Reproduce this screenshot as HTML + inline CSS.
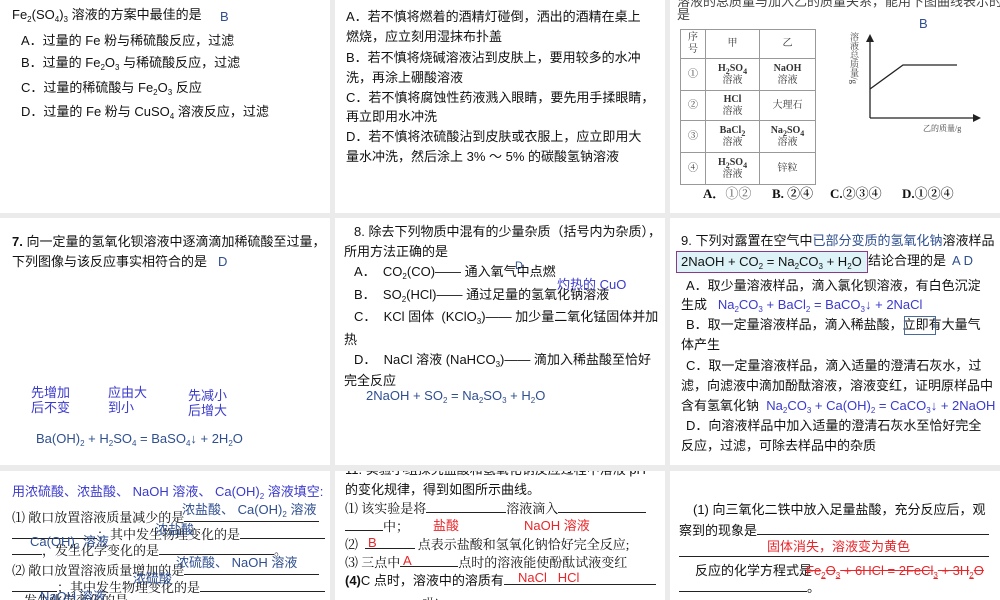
<!DOCTYPE html>
<html><head><meta charset="utf-8"><style>
body{margin:0;width:1000px;height:600px;background:#ebebeb;position:relative;overflow:hidden;font-family:"Liberation Sans","Noto Sans CJK SC",sans-serif;font-size:13px;color:#111}
.p{position:absolute;background:#fff;overflow:hidden}
.t{position:absolute;white-space:nowrap;line-height:16px}
.s{font-family:"Liberation Serif","Noto Serif CJK SC",serif}
sub{font-size:8px;vertical-align:-3px;line-height:0}
.b{color:#2f4f8f}.bl{color:#3a3acb}.r{color:#e8262a}
.u{display:inline-block;border-bottom:1px solid #222;height:12px}
td{border:1px solid #999;text-align:center;font-family:"Liberation Serif","Noto Serif CJK SC",serif;font-size:10px;line-height:12px;color:#333;padding:0}
</style></head><body>

<div class="p" style="left:0;top:0;width:330px;height:213px">
<div class="t" style="left:12px;top:7px">Fe<sub>2</sub>(SO<sub>4</sub>)<sub>3</sub> 溶液的方案中最佳的是</div>
<div class="t b" style="left:220px;top:9px">B</div>
<div class="t" style="left:21px;top:33px">A．过量的 Fe 粉与稀硫酸反应，过滤</div>
<div class="t" style="left:21px;top:55px">B．过量的 Fe<sub>2</sub>O<sub>3</sub> 与稀硫酸反应，过滤</div>
<div class="t" style="left:21px;top:80px">C．过量的稀硫酸与 Fe<sub>2</sub>O<sub>3</sub> 反应</div>
<div class="t" style="left:21px;top:104px">D．过量的 Fe 粉与 CuSO<sub>4</sub> 溶液反应，过滤</div>
</div>

<div class="p" style="left:335px;top:0;width:330px;height:213px">
<div class="t" style="left:11px;top:9px">A．若不慎将燃着的酒精灯碰倒，洒出的酒精在桌上</div>
<div class="t" style="left:11px;top:29px">燃烧，应立刻用湿抹布扑盖</div>
<div class="t" style="left:11px;top:50px">B．若不慎将烧碱溶液沾到皮肤上，要用较多的水冲</div>
<div class="t" style="left:11px;top:70px">洗，再涂上硼酸溶液</div>
<div class="t" style="left:11px;top:90px">C．若不慎将腐蚀性药液溅入眼睛，要先用手揉眼睛，</div>
<div class="t" style="left:11px;top:109px">再立即用水冲洗</div>
<div class="t" style="left:11px;top:129px">D．若不慎将浓硫酸沾到皮肤或衣服上，应立即用大</div>
<div class="t" style="left:11px;top:149px">量水冲洗，然后涂上 3% ～ 5% 的碳酸氢钠溶液</div>
</div>

<div class="p" style="left:670px;top:0;width:330px;height:213px">
<div class="t" style="left:7px;top:-6px;color:#444">溶液的总质量与加入乙的质量关系，能用下图曲线表示的</div>
<div class="t" style="left:7px;top:7px;color:#444">是</div>
<div class="t b" style="left:249px;top:16px">B</div>
<table style="position:absolute;left:10px;top:29px;border-collapse:collapse;width:136px">
<tr style="height:29px"><td style="width:24px">序<br>号</td><td style="width:53px">甲</td><td>乙</td></tr>
<tr style="height:32px"><td>①</td><td><b>H<sub>2</sub>SO<sub>4</sub></b><br>溶液</td><td><b>NaOH</b><br>溶液</td></tr>
<tr style="height:30px"><td>②</td><td><b>HCl</b><br>溶液</td><td>大理石</td></tr>
<tr style="height:32px"><td>③</td><td><b>BaCl<sub>2</sub></b><br>溶液</td><td><b>Na<sub>2</sub>SO<sub>4</sub></b><br>溶液</td></tr>
<tr style="height:32px"><td>④</td><td><b>H<sub>2</sub>SO<sub>4</sub></b><br>溶液</td><td>锌粒</td></tr>
</table>
<div class="t s" style="left:33px;top:186px;font-weight:bold">A．<span style="font-weight:normal;color:#555">①②</span></div>
<div class="t s" style="left:102px;top:186px;font-weight:bold">B. ②④</div>
<div class="t s" style="left:160px;top:186px;font-weight:bold">C.②③④</div>
<div class="t s" style="left:232px;top:186px;font-weight:bold">D.①②④</div>
<svg style="position:absolute;left:170px;top:28px" width="150" height="110">
<line x1="30" y1="10" x2="30" y2="90" stroke="#222" stroke-width="1.3"/>
<path d="M26,14 L30,6 L34,14Z" fill="#222"/>
<line x1="30" y1="90" x2="137" y2="90" stroke="#222" stroke-width="1.3"/>
<path d="M133,86 L141,90 L133,94Z" fill="#222"/>
<polyline points="30,61 63,37 117,37" fill="none" stroke="#222" stroke-width="1.3"/>
<text x="83" y="103" font-size="8" fill="#444" font-family="Liberation Serif,Noto Serif CJK SC,serif">乙的质量/g</text>
<text x="14" y="4" font-size="9" fill="#444" writing-mode="tb" font-family="Liberation Serif,Noto Serif CJK SC,serif">溶液总质量/g</text>
</svg>
</div>

<div class="p" style="left:0;top:218px;width:330px;height:247px">
<div class="t" style="left:12px;top:16px"><b>7.</b> 向一定量的氢氧化钡溶液中逐滴滴加稀硫酸至过量，</div>
<div class="t" style="left:12px;top:36px">下列图像与该反应事实相符合的是</div>
<div class="t b" style="left:218px;top:36px">D</div>
<div class="t bl" style="left:31px;top:167px;line-height:15px">先增加<br>后不变</div>
<div class="t bl" style="left:108px;top:167px;line-height:15px">应由大<br>到小</div>
<div class="t bl" style="left:188px;top:170px;line-height:15px">先减小<br>后增大</div>
<div class="t b" style="left:36px;top:213px">Ba(OH)<sub>2</sub> + H<sub>2</sub>SO<sub>4</sub> = BaSO<sub>4</sub>↓ + 2H<sub>2</sub>O</div>
</div>

<div class="p" style="left:335px;top:218px;width:330px;height:247px">
<div class="t" style="left:19px;top:6px">8. 除去下列物质中混有的少量杂质（括号内为杂质），</div>
<div class="t" style="left:9px;top:26px">所用方法正确的是</div>
<div class="t" style="left:19px;top:46px">A．&nbsp; CO<sub>2</sub>(CO)—— 通入氧气中点燃</div>
<div class="t b" style="left:180px;top:40px;font-size:11px">D</div>
<div class="t" style="left:19px;top:69px">B．&nbsp; SO<sub>2</sub>(HCl)—— 通过足量的氢氧化钠溶液</div>
<div class="t bl" style="left:222px;top:59px">灼热的 CuO</div>
<div class="t" style="left:19px;top:91px">C．&nbsp; KCl 固体 &nbsp;(KClO<sub>3</sub>)—— 加少量二氧化锰固体并加</div>
<div class="t" style="left:9px;top:114px">热</div>
<div class="t" style="left:19px;top:134px">D．&nbsp; NaCl 溶液 (NaHCO<sub>3</sub>)—— 滴加入稀盐酸至恰好</div>
<div class="t" style="left:9px;top:155px">完全反应</div>
<div class="t b" style="left:31px;top:170px">2NaOH + SO<sub>2</sub> = Na<sub>2</sub>SO<sub>3</sub> + H<sub>2</sub>O</div>
</div>

<div class="p" style="left:670px;top:218px;width:330px;height:247px">
<div class="t" style="left:11px;top:15px">9. 下列对露置在空气中<span class="b">已部分变质的氢氧化钠</span>溶液样品</div>
<div class="t" style="left:198px;top:35px">结论合理的是</div>
<div class="t b" style="left:282px;top:35px">A D</div>
<div class="t" style="left:6px;top:33px;width:186px;height:20px;background:#ddf3f8;border:1px solid #8a3a8a;padding-left:4px;line-height:20px">2NaOH + CO<sub>2</sub> = Na<sub>2</sub>CO<sub>3</sub> + H<sub>2</sub>O</div>
<div class="t" style="left:16px;top:60px">A．取少量溶液样品，滴入氯化钡溶液，有白色沉淀</div>
<div class="t" style="left:11px;top:79px">生成 &nbsp;&nbsp;<span class="bl">Na<sub>2</sub>CO<sub>3</sub> + BaCl<sub>2</sub> = BaCO<sub>3</sub>↓ + 2NaCl</span></div>
<div class="t" style="left:16px;top:99px">B．取一定量溶液样品，滴入稀盐酸，立即有大量气</div>
<div style="position:absolute;left:234px;top:98px;width:30px;height:17px;border:1px solid #4a6a9a"></div>
<div class="t" style="left:11px;top:119px">体产生</div>
<div class="t" style="left:16px;top:140px">C．取一定量溶液样品，滴入适量的澄清石灰水，过</div>
<div class="t" style="left:11px;top:160px">滤，向滤液中滴加酚酞溶液，溶液变红，证明原样品中</div>
<div class="t" style="left:11px;top:180px">含有氢氧化钠 &nbsp;<span class="bl">Na<sub>2</sub>CO<sub>3</sub> + Ca(OH)<sub>2</sub> = CaCO<sub>3</sub>↓ + 2NaOH</span></div>
<div class="t" style="left:16px;top:200px">D．向溶液样品中加入适量的澄清石灰水至恰好完全</div>
<div class="t" style="left:11px;top:220px">反应，过滤，可除去样品中的杂质</div>
</div>

<div class="p" style="left:0;top:471px;width:330px;height:129px">
<div class="t bl" style="left:12px;top:13px">用浓硫酸、浓盐酸、 NaOH 溶液、 Ca(OH)<sub>2</sub> 溶液填空:</div>
<div class="t s" style="left:12px;top:38px">⑴ 敞口放置溶液质量减少的是<span class="u" style="width:135px"></span></div>
<div class="t b" style="left:182px;top:31px">浓盐酸、 Ca(OH)<sub>2</sub> 溶液</div>
<div class="t s" style="left:12px;top:55px"><span class="u" style="width:85px"></span>；其中发生物理变化的是<span class="u" style="width:85px"></span></div>
<div class="t b" style="left:155px;top:51px">浓盐酸</div>
<div class="t s" style="left:12px;top:71px"><span class="u" style="width:30px"></span>，发生化学变化的是<span class="u" style="width:115px"></span>。</div>
<div class="t b" style="left:30px;top:63px">Ca(OH)<sub>2</sub> 溶液</div>
<div class="t s" style="left:12px;top:91px">⑵ 敞口放置溶液质量增加的是<span class="u" style="width:135px"></span></div>
<div class="t b" style="left:176px;top:84px">浓硫酸、 NaOH 溶液</div>
<div class="t s" style="left:12px;top:108px"><span class="u" style="width:45px"></span>；其中发生物理变化的是<span class="u" style="width:125px"></span></div>
<div class="t b" style="left:133px;top:100px">浓硫酸</div>
<div class="t s" style="left:24px;top:122px">发生化学变化的是</div>
<div class="t b" style="left:40px;top:118px">NaOH 溶液</div>
</div>

<div class="p" style="left:335px;top:471px;width:330px;height:129px">
<div class="t" style="left:10px;top:-9px">11. 实验小组探究盐酸和氢氧化钠反应过程中溶液 pH</div>
<div class="t" style="left:10px;top:11px">的变化规律，得到如图所示曲线。</div>
<div class="t s" style="left:10px;top:29px">⑴ 该实验是将<span class="u" style="width:80px"></span>溶液滴入<span class="u" style="width:88px"></span></div>
<div class="t s" style="left:10px;top:47px"><span class="u" style="width:38px"></span>中；</div>
<div class="t r" style="left:98px;top:47px">盐酸</div>
<div class="t r" style="left:189px;top:47px">NaOH 溶液</div>
<div class="t s" style="left:10px;top:65px">⑵ &nbsp;<span class="u" style="width:50px"></span> 点表示盐酸和氢氧化钠恰好完全反应;</div>
<div class="t r" style="left:33px;top:64px">B</div>
<div class="t s" style="left:10px;top:83px">⑶ 三点中<span class="u" style="width:58px"></span>点时的溶液能使酚酞试液变红</div>
<div class="t r" style="left:68px;top:82px">A</div>
<div class="t" style="left:10px;top:101px"><b>(4)</b>C 点时，溶液中的溶质有<span class="u" style="width:152px"></span></div>
<div class="t r" style="left:183px;top:99px">NaCl &nbsp; HCl</div>
<div class="t s" style="left:88px;top:122px;font-size:8px">pH▲</div>
</div>

<div class="p" style="left:670px;top:471px;width:330px;height:129px">
<div class="t" style="left:23px;top:31px">(1) 向三氧化二铁中放入足量盐酸，充分反应后，观</div>
<div class="t" style="left:9px;top:51px">察到的现象是<span class="u" style="width:232px"></span></div>
<div class="t" style="left:9px;top:73px"><span class="u" style="width:310px"></span></div>
<div class="t r" style="left:97px;top:68px">固体消失，溶液变为黄色</div>
<div class="t" style="left:25px;top:92px">反应的化学方程式是</div>
<div class="t r" style="left:136px;top:92px;text-decoration:line-through">Fe<sub>2</sub>O<sub>3</sub> + 6HCl = 2FeCl<sub>3</sub> + 3H<sub>2</sub>O</div>
<div class="t" style="left:9px;top:108px"><span class="u" style="width:128px"></span>。</div>
<div class="t" style="left:23px;top:130px">(2) 白醋、柠檬酸溶液也能与三氧化二铁发生类似反</div>
</div>
</body></html>
